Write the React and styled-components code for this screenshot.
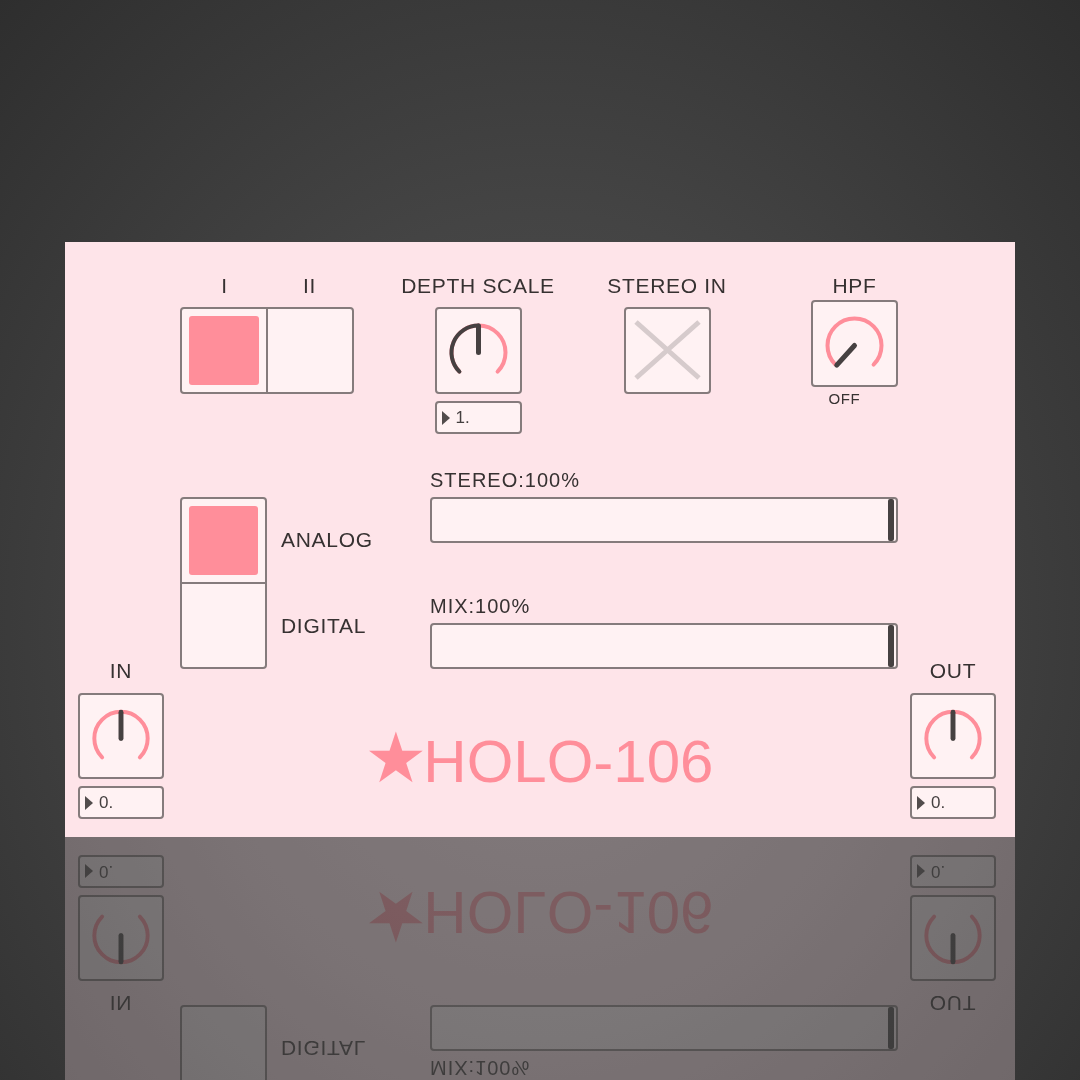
import React from "react";
import styled, { createGlobalStyle } from "styled-components";

const GlobalStyle = createGlobalStyle`
  html, body {
    margin: 0;
    padding: 0;
    background: #2e2e2e;
  }
  body {
    font-family: "Liberation Sans", Arial, sans-serif;
  }
`;

const INK = "#363131";
const BORDER = "#857b7c";
const CELL = "#fff2f3";
const PINK = "#ff8e9a";

const Stage = styled.div`
  width: 1080px;
  height: 1080px;
  box-sizing: border-box;
  padding: 242px 0 0 65px;
  overflow: hidden;
  background: radial-gradient(
    ellipse 75% 85% at 50% 58%,
    #525252 0%,
    #444444 45%,
    #2c2c2c 100%
  );
`;

const Panel = styled.div`
  width: 950px;
  height: 595px;
  box-sizing: border-box;
  padding: 32px 19px 18px 13px;
  display: flex;
  background: #fee4e9;
  -webkit-box-reflect: below 0 linear-gradient(rgba(0, 0, 0, 0.29), rgba(0, 0, 0, 0.29));
`;

const SideColumn = styled.div`
  width: 86px;
  align-self: flex-end;
  display: flex;
  flex-direction: column;
  align-items: center;
`;

const Center = styled.div`
  flex: 1;
  margin: 0 12px 0 16px;
  display: flex;
  flex-direction: column;
`;

const TopRow = styled.div`
  display: flex;
  align-items: flex-start;
`;

const Column = styled.div`
  width: ${(p) => p.$w}px;
  margin-left: ${(p) => p.$ml || 0}px;
  display: flex;
  flex-direction: column;
  align-items: center;
`;

const Label = styled.div`
  font-size: 21px;
  line-height: 24px;
  letter-spacing: 0.7px;
  color: ${INK};
  white-space: nowrap;
  margin-bottom: ${(p) => (p.$mb === undefined ? 9 : p.$mb)}px;
`;

const SmallLabel = styled.div`
  font-size: 15px;
  line-height: 18px;
  letter-spacing: 0.6px;
  color: ${INK};
  margin-top: 3px;
  margin-right: 20px;
`;

const LabelRow = styled.div`
  display: flex;
  padding: 0 2px;
  width: 100%;
  box-sizing: border-box;
`;

const CellLabel = styled(Label)`
  flex: 1;
  text-align: center;
`;

const SwitchGroup = styled.div`
  display: flex;
  flex-direction: ${(p) => (p.$vertical ? "column" : "row")};
  border: 2px solid ${BORDER};
  border-radius: 4px;
  background: ${BORDER};
  gap: 2px;
  overflow: hidden;
`;

const SwitchCell = styled.div`
  width: ${(p) => p.$w}px;
  height: ${(p) => p.$h}px;
  box-sizing: border-box;
  padding: 7px;
  background: ${CELL};

  &::after {
    content: "";
    display: ${(p) => (p.$on ? "block" : "none")};
    width: 100%;
    height: 100%;
    border-radius: 3px;
    background: ${PINK};
  }
`;

const Box = styled.div`
  width: ${(p) => p.$size || 87}px;
  height: ${(p) => p.$size || 87}px;
  box-sizing: border-box;
  border: 2px solid ${BORDER};
  border-radius: 4px;
  background: ${CELL};
  display: flex;
  align-items: center;
  justify-content: center;
`;

const Readout = styled.div`
  width: ${(p) => p.$w || 87}px;
  height: 33px;
  margin-top: 7px;
  box-sizing: border-box;
  border: 2px solid ${BORDER};
  border-radius: 4px;
  background: ${CELL};
  display: flex;
  align-items: center;
  padding-left: 5px;
  gap: 6px;
  font-size: 17px;
  color: #443f3f;
`;

const Arrow = styled.span`
  width: 0;
  height: 0;
  border-top: 7px solid transparent;
  border-bottom: 7px solid transparent;
  border-left: 8px solid #524c4c;
`;

const MiddleRow = styled.div`
  margin-top: 34px;
  display: flex;
  align-items: flex-end;
  justify-content: space-between;
`;

const ModeGroup = styled.div`
  display: flex;
  align-items: stretch;
`;

const ModeLabels = styled.div`
  display: flex;
  flex-direction: column;
  justify-content: space-around;
  margin-left: 14px;
`;

const ModeLabel = styled(Label)`
  margin: 0;
`;

const Sliders = styled.div`
  width: 468px;
  display: flex;
  flex-direction: column;
`;

const SliderLabel = styled.div`
  font-size: 20px;
  line-height: 24px;
  letter-spacing: 1px;
  color: ${INK};
  margin: ${(p) => (p.$first ? 0 : 51)}px 0 5px;
`;

const Track = styled.div`
  height: 46px;
  box-sizing: border-box;
  border: 2px solid ${BORDER};
  border-radius: 4px;
  background: ${CELL};
  display: flex;
  padding-right: 2px;
`;

const Fill = styled.div`
  display: flex;
  justify-content: flex-end;
`;

const Handle = styled.div`
  width: 6px;
  border-radius: 2px;
  background: #464141;
`;

const Logo = styled.div`
  margin-top: 63px;
  text-align: center;
  font-family: "Liberation Sans", "DejaVu Sans", sans-serif;
  font-size: 60px;
  line-height: 60px;
  color: ${PINK};
  white-space: nowrap;
`;

const Star = styled.span`
  font-family: "DejaVu Sans", sans-serif;
  font-size: 70px;
  line-height: 0;
  margin-right: -4px;
`;

const polar = (cx, cy, r, deg) => {
  const a = (deg * Math.PI) / 180;
  return [cx + r * Math.sin(a), cy - r * Math.cos(a)];
};

const arc = (cx, cy, r, a0, a1) => {
  const [x0, y0] = polar(cx, cy, r, a0);
  const [x1, y1] = polar(cx, cy, r, a1);
  const large = a1 - a0 > 180 ? 1 : 0;
  return `M${x0} ${y0} A${r} ${r} 0 ${large} 1 ${x1} ${y1}`;
};

function Knob({ pointer = 0, fillTo }) {
  const cx = 41.5;
  const cy = 43.5;
  const r = 27;
  const [px, py] = polar(cx, cy, r - 0.5, pointer);
  return (
    <svg width="83" height="83" viewBox="0 0 83 83">
      <path d={arc(cx, cy, r, -135, 135)} fill="none" stroke={PINK} strokeWidth="4" strokeLinecap="round" />
      {fillTo !== undefined && (
        <path d={arc(cx, cy, r, -135, fillTo)} fill="none" stroke="#464141" strokeWidth="4" strokeLinecap="round" />
      )}
      <line x1={cx} y1={cy} x2={px} y2={py} stroke="#464141" strokeWidth="5" strokeLinecap="round" />
    </svg>
  );
}

function Cross() {
  return (
    <svg width="83" height="83" viewBox="0 0 83 83">
      <path d="M10 13 L73 69 M73 13 L10 69" stroke="#d6cbcc" strokeWidth="5" fill="none" />
    </svg>
  );
}

function Slider({ label, value, first }) {
  return (
    <>
      <SliderLabel $first={first}>{label}</SliderLabel>
      <Track>
        <Fill style={{ width: `${value}%` }}>
          <Handle />
        </Fill>
      </Track>
    </>
  );
}

function Gain({ label, value }) {
  return (
    <SideColumn>
      <Label $mb={10}>{label}</Label>
      <Box $size={86}>
        <Knob pointer={0} />
      </Box>
      <Readout $w={86}>
        <Arrow />
        {value}
      </Readout>
    </SideColumn>
  );
}

export default function App() {
  return (
    <>
      <GlobalStyle />
      <Stage>
        <Panel>
          <Gain label="IN" value="0." />
          <Center>
            <TopRow>
              <Column $w={174}>
                <LabelRow>
                  <CellLabel>I</CellLabel>
                  <CellLabel>II</CellLabel>
                </LabelRow>
                <SwitchGroup>
                  <SwitchCell $w={84} $h={83} $on />
                  <SwitchCell $w={84} $h={83} />
                </SwitchGroup>
              </Column>
              <Column $w={160} $ml={44}>
                <Label>DEPTH SCALE</Label>
                <Box>
                  <Knob pointer={0} fillTo={0} />
                </Box>
                <Readout>
                  <Arrow />
                  1.
                </Readout>
              </Column>
              <Column $w={120} $ml={49}>
                <Label>STEREO IN</Label>
                <Box>
                  <Cross />
                </Box>
              </Column>
              <Column $w={87} $ml={84}>
                <Label $mb={2}>HPF</Label>
                <Box>
                  <Knob pointer={-138} />
                </Box>
                <SmallLabel>OFF</SmallLabel>
              </Column>
            </TopRow>
            <MiddleRow>
              <ModeGroup>
                <SwitchGroup $vertical>
                  <SwitchCell $w={83} $h={83} $on />
                  <SwitchCell $w={83} $h={83} />
                </SwitchGroup>
                <ModeLabels>
                  <ModeLabel>ANALOG</ModeLabel>
                  <ModeLabel>DIGITAL</ModeLabel>
                </ModeLabels>
              </ModeGroup>
              <Sliders>
                <Slider label="STEREO:100%" value={100} first />
                <Slider label="MIX:100%" value={100} />
              </Sliders>
            </MiddleRow>
            <Logo>
              <Star>★</Star>HOLO-106
            </Logo>
          </Center>
          <Gain label="OUT" value="0." />
        </Panel>
      </Stage>
    </>
  );
}
